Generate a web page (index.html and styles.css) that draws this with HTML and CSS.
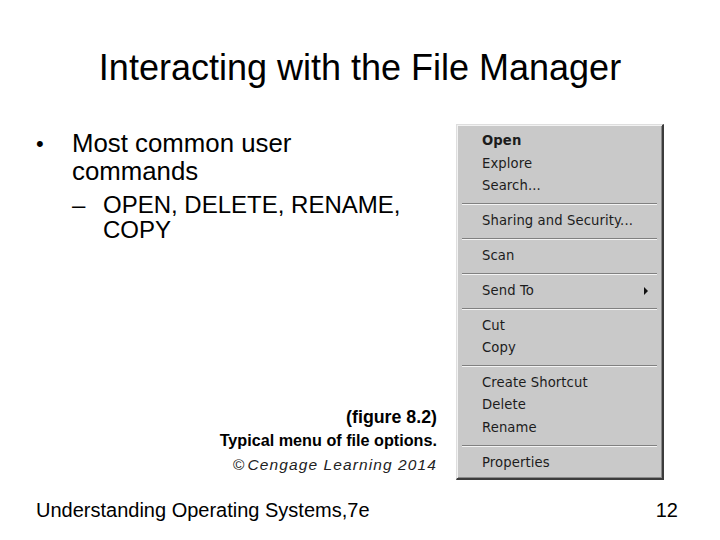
FILE: index.html
```html
<!DOCTYPE html>
<html>
<head>
<meta charset="utf-8">
<link rel="stylesheet" href="styles.css">
</head>
<body>
<div class="slide">
  <h1 class="title">Interacting with the File Manager</h1>
  <div class="main">
    <div class="left">
      <ul class="bullets">
        <li class="lvl1"><span class="mark">•</span><span class="txt">Most common user commands</span></li>
        <li class="lvl2"><span class="mark">–</span><span class="txt">OPEN, DELETE, RENAME, COPY</span></li>
      </ul>
      <div class="caption">
        <div class="cap-fig">(figure 8.2)</div>
        <div class="cap-text">Typical menu of file options.</div>
        <div class="cap-copy">©&#8202;Cengage Learning 2014</div>
      </div>
    </div>
    <div class="menu">
      <div class="item bold">Open</div>
      <div class="item">Explore</div>
      <div class="item">Search...</div>
      <div class="sep"></div>
      <div class="item">Sharing and Security...</div>
      <div class="sep"></div>
      <div class="item">Scan</div>
      <div class="sep"></div>
      <div class="item sub">Send To<span class="arrow"></span></div>
      <div class="sep"></div>
      <div class="item">Cut</div>
      <div class="item">Copy</div>
      <div class="sep"></div>
      <div class="item">Create Shortcut</div>
      <div class="item">Delete</div>
      <div class="item">Rename</div>
      <div class="sep"></div>
      <div class="item">Properties</div>
    </div>
  </div>
  <div class="footer">
    <span>Understanding Operating Systems,7e</span>
    <span>12</span>
  </div>
</div>
</body>
</html>
```
FILE: styles.css
```css
html, body {
  margin: 0;
  padding: 0;
  background: #ffffff;
}
.slide {
  width: 720px;
  height: 540px;
  display: flex;
  flex-direction: column;
  font-family: "Liberation Sans", Arial, sans-serif;
  color: #000;
  overflow: hidden;
}
.title {
  margin: 0;
  padding-top: 48px;
  height: 40px;
  line-height: 40px;
  font-size: 36px;
  font-weight: normal;
  text-align: center;
}
.main {
  margin-top: 36px;
  display: grid;
  grid-template-columns: 1fr 208px;
  column-gap: 19px;
  padding-right: 56px;
}
.left {
  display: flex;
  flex-direction: column;
  justify-content: space-between;
  padding-bottom: 2px;
}
.bullets {
  list-style: none;
  margin: 0;
  padding: 5px 0 0 0;
}
.bullets li {
  display: flex;
}
.lvl1 {
  font-size: 25.8px;
  line-height: 28px;
  padding-left: 36px;
}
.lvl1 .mark {
  width: 36px;
  flex: none;
  font-size: 22px;
  position: relative;
  top: 1px;
}
.lvl1 .txt {
  width: 250px;
}
.lvl2 {
  font-size: 24px;
  line-height: 25px;
  padding-left: 72px;
  margin-top: 7px;
}
.lvl2 .mark {
  width: 31px;
  flex: none;
}
.lvl2 .txt {
  width: 320px;
}
.caption {
  text-align: right;
}
.cap-fig {
  font-weight: bold;
  font-size: 17.8px;
  line-height: 23px;
}
.cap-text {
  font-weight: bold;
  font-size: 16.2px;
  line-height: 23px;
}
.cap-copy {
  font-style: italic;
  font-size: 15.5px;
  letter-spacing: 1.1px;
  line-height: 26px;
  color: #222;
  padding-right: 0;
}
.menu {
  background: #c9c9c9;
  border-top: 1px solid #dedede;
  border-left: 1px solid #dedede;
  border-right: 2px solid #3c3c3c;
  border-bottom: 2px solid #3c3c3c;
  box-shadow: inset 1px 1px 0 #f2f2f2, inset -1px -1px 0 #8a8a8a;
  padding: 5px 2px 4px 2px;
  display: flex;
  flex-direction: column;
  font-family: "DejaVu Sans", Tahoma, sans-serif;
  font-size: 13.2px;
  color: #1c1c1c;
}
.item {
  height: 22.5px;
  line-height: 22.5px;
  padding-left: 23px;
  position: relative;
  letter-spacing: 0.1px;
}
.item.bold {
  font-weight: bold;
}
.arrow {
  position: absolute;
  right: 12px;
  top: 7px;
  width: 0;
  height: 0;
  border-top: 4px solid transparent;
  border-bottom: 4px solid transparent;
  border-left: 4px solid #111;
}
.sep {
  height: 12.4px;
  display: flex;
  flex-direction: column;
  justify-content: center;
  margin: 0 3px;
}
.sep::before {
  content: "";
  display: block;
  height: 1px;
  background: #808080;
  box-shadow: 0 1px 0 #f4f4f4;
}
.footer {
  margin-top: auto;
  height: 32px;
  padding: 0 42px 0 36px;
  display: flex;
  justify-content: space-between;
  align-items: center;
  font-size: 20px;
  margin-bottom: 14px;
}
```
